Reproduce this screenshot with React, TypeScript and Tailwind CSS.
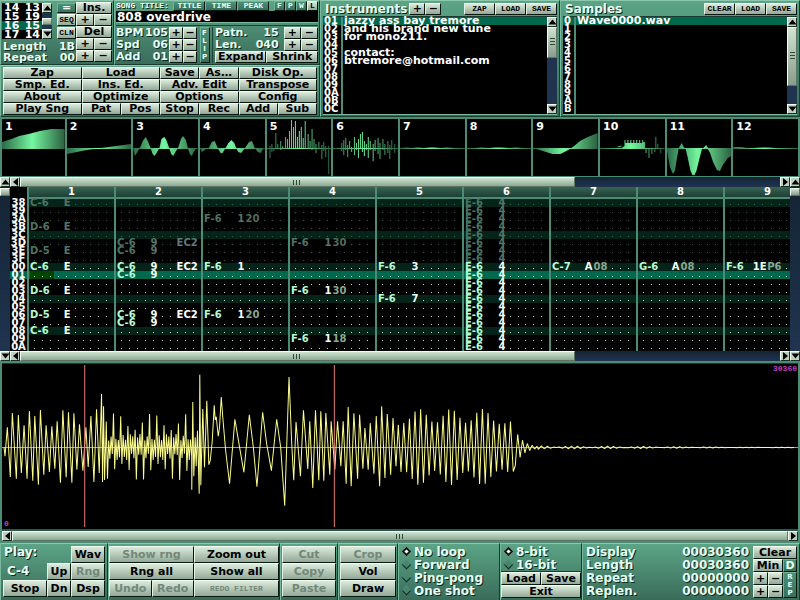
import { useState } from "react";
import type { ReactNode } from "react";
import clsx from "clsx";

const PANEL =
  "border-t border-l border-t-[#8cc8ac] border-l-[#78b89c] border-r border-b border-r-[#183c30] border-b-[#183c30] bg-linear-to-b from-[#5ca486] to-[#3a6c5a]";
const LABEL = "text-[#e4fff0] [text-shadow:1px_1px_0_#10281e]";
const TINY = "font-['Liberation_Mono',monospace] text-[8px] leading-[8px]";

type BtnProps = {
  children: ReactNode;
  className?: string;
  small?: boolean;
  green?: boolean;
  disabled?: boolean;
};

function Btn({ children, className, small, green, disabled }: BtnProps) {
  return (
    <button
      type="button"
      disabled={disabled}
      className={clsx(
        "flex min-w-0 items-center justify-center border border-r-[#081810] border-b-[#081810] whitespace-nowrap",
        small ? TINY : "leading-[10px]",
        green
          ? "border-t-[#70b498] border-l-[#70b498] bg-linear-to-b from-[#4c9078] to-[#35705c] text-[#e4fff0]"
          : "border-t-[#f4fff4] border-l-[#e4f4e4] bg-linear-to-b from-[#dcecdc] to-[#93a898]",
        !green && (disabled ? "text-[#72887a]" : "text-black"),
        className,
      )}
    >
      {children}
    </button>
  );
}

function PlusMinus() {
  return (
    <>
      <Btn>+</Btn>
      <Btn>−</Btn>
    </>
  );
}

const ARROWS = {
  up: "M0.5 6.5L4.5 1.5L8.5 6.5Z",
  down: "M0.5 1.5L4.5 6.5L8.5 1.5Z",
  left: "M7 0V8L2 4Z",
  right: "M2 0V8L7 4Z",
};

function Arrow({ dir }: { dir: keyof typeof ARROWS }) {
  return (
    <button
      type="button"
      aria-label={`Scroll ${dir}`}
      className="flex h-[10px] w-[10px] shrink-0 items-center justify-center border border-t-[#f4fff4] border-l-[#f4fff4] border-r-[#183024] border-b-[#183024] bg-[#c0d0c0]"
    >
      <svg viewBox="0 0 9 8" className="h-[8px] w-[9px] shrink-0">
        <path d={ARROWS[dir]} fill="#000" />
      </svg>
    </button>
  );
}

function Thumb({ size, vertical, grip = true }: { size: string; vertical?: boolean; grip?: boolean }) {
  return (
    <div
      style={vertical ? { height: size } : { width: size }}
      className={clsx(
        "flex items-center justify-center gap-px border border-t-[#f4fff4] border-l-[#f4fff4] border-r-[#5c7464] border-b-[#5c7464] bg-linear-to-b from-[#d0e4d0]",
        vertical ? "flex-col to-[#8a9c8c]" : "h-[10px] to-[#8ca894]",
      )}
    >
      {grip &&
        [0, 1, 2].map((i) => (
          <i
            key={i}
            className={clsx(
              "border-[#30483c]",
              vertical ? "h-[2px] w-[5px] border-t" : "h-[5px] w-[2px] border-l",
            )}
          />
        ))}
    </div>
  );
}

function VScroll({ size }: { size: string }) {
  return (
    <div className="flex w-[10px] shrink-0 flex-col bg-[#203450]">
      <Arrow dir="up" />
      <div className="min-h-0 flex-1">
        <Thumb size={size} vertical />
      </div>
      <Arrow dir="down" />
    </div>
  );
}

function HScroll({ size, corner }: { size: string; corner?: "up" | "down" }) {
  return (
    <div className="flex bg-linear-to-b from-[#142434] to-[#203450]">
      {corner && <Arrow dir={corner} />}
      <Arrow dir="left" />
      <div className="min-w-0 flex-1">
        <Thumb size={size} />
      </div>
      <Arrow dir="right" />
      {corner && <Arrow dir={corner} />}
    </div>
  );
}

const ORDER = [
  ["14", "13"],
  ["15", "19"],
  ["16", "15"],
  ["17", "14"],
];

function OrderPanel() {
  return (
    <section className={clsx(PANEL, "flex justify-between px-px")}>
      <div className="flex w-[74px] flex-col">
        <div className="flex justify-between py-[2px]">
          <div className="flex h-[36px] bg-black">
            <div className="text-white">
              {ORDER.map(([pos, pat], i) => (
                <div key={pos} className={clsx("flex h-[9px] w-[40px] justify-between px-[2px] leading-[9px]", i === 2 && "bg-[#00684c]")}>
                  <span>{pos}</span>
                  <span>{pat}</span>
                </div>
              ))}
            </div>
            <div className="flex w-[10px] flex-col justify-between bg-[#203450]">
              <Arrow dir="up" />
              <Thumb size="7px" vertical grip={false} />
              <Arrow dir="down" />
            </div>
          </div>
          <div className="flex w-[19px] flex-col justify-between">
            <Btn green className="h-[10px]">=</Btn>
            <Btn small className="h-[12px]">SEQ</Btn>
            <Btn small className="h-[12px]">CLN</Btn>
          </div>
        </div>
        <div className={clsx("flex justify-between px-px leading-[11px]", LABEL)}>
          <span>Length</span>
          <span>1B</span>
        </div>
        <div className={clsx("flex justify-between px-px leading-[12px]", LABEL)}>
          <span>Repeat</span>
          <span>00</span>
        </div>
      </div>
      <div className="grid w-[36px] auto-rows-[12px] grid-cols-2 pt-px">
        <Btn className="col-span-2">Ins.</Btn>
        <PlusMinus />
        <Btn className="col-span-2">Del</Btn>
        <PlusMinus />
        <PlusMinus />
      </div>
    </section>
  );
}

function SongPanel() {
  const [title, setTitle] = useState("808 overdrive");
  return (
    <section className={clsx(PANEL, "px-px")}>
      <div className="flex items-center justify-between">
        <label htmlFor="song-title" className={clsx(TINY, LABEL)}>
          SONG TITLE:
        </label>
        <div className="flex h-[10px]">
          <Btn small green className="w-[32px]">TITLE</Btn>
          <Btn small green className="w-[32px]">TIME</Btn>
          <Btn small green className="w-[32px]">PEAK</Btn>
        </div>
        <div className="flex h-[10px]">
          <Btn small green className="w-[11px]">F</Btn>
          <Btn small green className="w-[11px]">P</Btn>
          <Btn small green className="w-[11px]">W</Btn>
          <Btn small className="w-[11px]">L</Btn>
        </div>
      </div>
      <input
        id="song-title"
        value={title}
        onChange={(e) => setTitle(e.target.value)}
        className="block h-[12px] w-full border-b border-[#78b89c] bg-black px-px text-[12px] leading-[11px] text-white outline-none"
      />
      <div className="mt-[2px] flex justify-between border-t border-[#1c4436] pt-px leading-[12px]">
        <div className="grid auto-rows-[12px] grid-cols-[29px_24px_14px_14px]">
          {[
            ["BPM", "105"],
            ["Spd", "06"],
            ["Add", "01"],
          ].map(([name, value]) => (
            <div key={name} className="contents">
              <span className={LABEL}>{name}</span>
              <span className={clsx("pr-px text-right", LABEL)}>{value}</span>
              <PlusMinus />
            </div>
          ))}
        </div>
        <Btn green className="w-[10px]">
          <span className="text-[7px] leading-[8px] [text-orientation:upright] [writing-mode:vertical-rl]">FLIP</span>
        </Btn>
        <div className="grid w-[106px] auto-rows-[12px] grid-cols-6 border-l border-[#1c4436] pl-[2px]">
          <span className={clsx("col-span-2", LABEL)}>Patn.</span>
          <span className={clsx("col-span-2 pr-[5px] text-right", LABEL)}>15</span>
          <PlusMinus />
          <span className={clsx("col-span-2", LABEL)}>Len.</span>
          <span className={clsx("col-span-2 pr-[5px] text-right", LABEL)}>040</span>
          <PlusMinus />
          <Btn className="col-span-3">Expand</Btn>
          <Btn className="col-span-3">Shrink</Btn>
        </div>
      </div>
    </section>
  );
}

const MENU: [string, number][] = [
  ["Zap", 2], ["Load", 2], ["Save", 1], ["As…", 1], ["Disk Op.", 2],
  ["Smp. Ed.", 2], ["Ins. Ed.", 2], ["Adv. Edit", 2], ["Transpose", 2],
  ["About", 2], ["Optimize", 2], ["Options", 2], ["Config", 2],
  ["Play Sng", 2], ["Pat", 1], ["Pos", 1], ["Stop", 1], ["Rec", 1], ["Add", 1], ["Sub", 1],
];

function MenuPanel() {
  return (
    <section className={clsx(PANEL, "grid auto-rows-[12px] grid-cols-8 px-[2px] py-px")}>
      {MENU.map(([name, span]) => (
        <Btn key={name} className={span === 2 ? "col-span-2" : undefined}>
          {name}
        </Btn>
      ))}
    </section>
  );
}

type ListProps = {
  title: string;
  header: ReactNode;
  keys: string[];
  names: string[];
  numClass: string;
  thumb: string;
};

function ListPanel({ title, header, keys, names, numClass, thumb }: ListProps) {
  return (
    <section className={clsx(PANEL, "flex flex-col px-[2px] pb-px")}>
      <div className="flex h-[15px] items-center">
        <h2 className={clsx("px-[2px] text-[12px]", LABEL)}>{title}</h2>
        {header}
      </div>
      <div className="flex flex-1 border-t border-b border-t-[#183c30] border-b-[#78b89c] bg-black">
        <div className="flex flex-1 flex-col text-white">
          {keys.map((key, i) => (
            <div key={key} className="flex h-[8px] text-[10px] leading-[8px] last:flex-1">
              <span className={clsx("border-r-2 border-[#4c8c74] pl-px", numClass, i === 0 && "bg-[#00684c]")}>{key}</span>
              <span className={clsx("flex-1 pl-px text-[11px] whitespace-pre", i === 0 && "bg-[#00684c]")}>{names[i]}</span>
            </div>
          ))}
        </div>
        <VScroll size={thumb} />
      </div>
    </section>
  );
}

const INSTRUMENTS = [
  "jazzy ass bay tremore",
  "and his brand new tune",
  "for mono211.",
  "",
  "contact:",
  "btremore@hotmail.com",
];

// spikes are [x, top, bottom] around the zero line at y=29
const SPIKES_5 = [
  [3, 27, 39], [5, 25, 33], [7, 29, 32], [9, 14, 29], [11, 25, 29], [14, 22, 31], [16, 27, 29], [19, 18, 29], [21, 20, 29],
  [23, 12, 30], [25, 1, 29], [27, 8, 29], [29, 2, 29], [31, 18, 29], [33, 12, 29], [35, 8, 29], [37, 19, 29], [39, 2, 29],
  [42, 15, 29], [44, 22, 29], [46, 10, 31], [48, 20, 29], [50, 25, 34], [53, 23, 30], [56, 26, 40], [58, 23, 32], [60, 27, 38], [63, 27, 55],
];
const SPIKES_6 = [
  [9, 24, 32], [11, 21, 36], [13, 19, 31], [15, 26, 38], [17, 22, 30], [19, 28, 33], [22, 18, 36], [24, 24, 31], [26, 20, 39],
  [28, 15, 30], [30, 13, 33], [32, 22, 37], [34, 25, 31], [36, 18, 39], [38, 22, 31], [41, 25, 42], [43, 21, 32], [46, 19, 35],
  [48, 24, 40], [51, 20, 31], [53, 25, 36], [56, 22, 34], [58, 26, 40], [60, 21, 31], [63, 25, 34],
];

const spikes = (list: number[][]) => list.map(([x, a, b]) => `M${x} ${a}V${b}`).join("");

const SCOPES: { fill?: string; line?: string }[] = [
  { fill: "M0 29V23L10 20 18 17 28 15 40 12 52 10 66 10V29Z" },
  { fill: "M0 29V35L10 33 20 31 35 29 50 27 66 25V29Z" },
  { fill: "M0 29L2 37 5 32 7 29 10 22 13 18 15 22 18 29 20 35 22 37 24 34 27 29 29 20 32 18 34 21 37 29 39 35 41 37 44 32 46 29 49 20 51 17 54 21 56 29 58 35 60 37 62 33 65 29Z" },
  { fill: "M0 29L2 33 6 30 9 29 12 23 15 22 18 29 21 34 23 34 26 29 29 24 32 21 35 24 37 29 39 33 42 34 46 29 50 23 53 22 56 29 59 33 62 34 65 29Z" },
  { line: spikes(SPIKES_5) },
  { line: spikes(SPIKES_6) },
  { line: "M0 29.5L6 29 12 29.5 18 29 24 29.5 30 29 36 29 42 29.5 48 29 56 29.5 66 29.5" },
  { line: "M0 29.5H8L14 29 22 29.5 28 29 36 29 44 29.5 50 29 58 29.5H66" },
  { fill: "M0 29L10 32 20 35 28 35 36 31 42 27 48 22 56 18 66 14V29Z" },
  { line: "M18 28L22 27M47 29V34M50 29V39M53 29V35M56 29V33M57 18V29M59 25V29M62 29V34", fill: "M22 29L25 27V21H26V24H28V21H29V24H31V21H32V24H34V21H35V24H37V21H38V24H40V21H41V24H43V21H44V23H46V29Z" },
  { fill: "M0 29H12L15 24 17 28 18 29H37L40 26 42 29H66V37L62 39 57 46 54 52 51 51 47 43 44 34 41 29H36L33 40 30 52 28 56H26L24 52 21 38 19 30 18 29H12L10 40 8 52 6 55 3 48 0 32Z" },
  { line: "M0 28.5H8L14 29.5H20L28 29H36L44 29.5H66" },
];

function Scopes() {
  return (
    <div className="grid grid-cols-12 border-t border-b border-[#4c8c74] bg-black">
      {SCOPES.map((scope, i) => (
        <div key={i} className="relative h-[57px] border-r-2 border-[#4c8c74] first:border-l-2">
          <svg viewBox="0 0 66 57" preserveAspectRatio="none" className="block h-full w-full">
            <defs>
              <linearGradient id={`glow${i}`} gradientUnits="userSpaceOnUse" x1="0" y1="0" x2="66" y2="0">
                <stop offset="0" stopColor="#2c6848" />
                <stop offset="0.48" stopColor="#74f8a0" />
                <stop offset="1" stopColor="#2c6040" />
              </linearGradient>
            </defs>
            <rect y="29" width="66" height="1" fill={`url(#glow${i})`} />
            {scope.fill && <path d={scope.fill} fill={`url(#glow${i})`} />}
            {scope.line && <path d={scope.line} fill="none" stroke={`url(#glow${i})`} />}
          </svg>
          <span className="absolute top-[3px] left-[3px] leading-[9px] text-white">{i + 1}</span>
        </div>
      ))}
    </div>
  );
}

const LINES = [
  "38", "39", "3A", "3B", "3C", "3D", "3E", "3F",
  "00", "01", "02", "03", "04", "05", "06", "07", "08", "09", "0A",
];
const CURRENT = 9;

// note, instrument, volume, effect
type Cell = [string, string?, string?, string?];

const CHANNELS: Record<number, Cell>[] = [
  { 0: ["C-6", "E"], 3: ["D-6", "E"], 6: ["D-5", "E"], 8: ["C-6", "E"], 11: ["D-6", "E"], 14: ["D-5", "E"], 16: ["C-6", "E"] },
  {
    5: ["C-6", "9", "", "EC2"], 6: ["C-6", "9"], 8: ["C-6", "9", "", "EC2"], 9: ["C-6", "9"],
    14: ["C-6", "9", "", "EC2"], 15: ["C-6", "9"],
  },
  { 2: ["F-6", "1", "20"], 8: ["F-6", "1"], 14: ["F-6", "1", "20"] },
  { 5: ["F-6", "1", "30"], 11: ["F-6", "1", "30"], 17: ["F-6", "1", "18"] },
  { 8: ["F-6", "3"], 12: ["F-6", "7"] },
  Object.fromEntries(LINES.map((_, i) => [i, ["E-6", "4"] as Cell])),
  { 8: ["C-7", "A", "08"] },
  { 8: ["G-6", "A", "08"] },
  { 8: ["F-6", "1E", "P6"] },
];

function rowBg(i: number) {
  if (i === CURRENT) return "bg-[#00684c]";
  return i % 4 === 0 ? "bg-[#04241a]" : "bg-black";
}

function Field({ text, className, dim }: { text?: string; className: string; dim: boolean }) {
  return (
    <span
      className={clsx(
        "h-[8px]",
        className,
        !text && "bg-size-[8px_8px] bg-position-[4px_5px]",
        !text && dim && "bg-[conic-gradient(from_270deg_at_1px_1px,#3c5c50_90deg,transparent_0)]",
        !text && !dim && "bg-[conic-gradient(from_270deg_at_1px_1px,#c8dcd0_90deg,transparent_0)]",
      )}
    >
      {text}
    </span>
  );
}

function PatternRow({ cell, line, first }: { cell?: Cell; line: number; first: boolean }) {
  const dim = line < 8;
  const [note, ins, vol, fx] = cell ?? [];
  return (
    <div className={clsx("flex h-[8px] pl-px text-[10px] leading-[8px]", rowBg(line))}>
      <Field
        text={note}
        dim={dim}
        className={clsx("w-[24px]", dim ? "text-[#4c7464]" : "text-[#b4fcd0]", first && line === CURRENT && "bg-[#004400]")}
      />
      <Field text={ins} dim={dim} className={clsx("w-[17px] text-right", dim ? "text-[#587468]" : "text-[#f0fff4]")} />
      <Field text={vol} dim={dim} className={clsx("w-[16px] text-center", dim ? "text-[#506c5c]" : "text-[#88a890]")} />
      <Field text={fx} dim={dim} className={clsx("w-[28px] text-center", dim ? "text-[#60787c]" : "text-white")} />
    </div>
  );
}

function PatternScroll() {
  return (
    <div className="w-[10px] shrink-0 bg-linear-to-b from-[#142434] to-[#203450] pt-px">
      <Thumb size="8px" vertical grip={false} />
    </div>
  );
}

function Pattern() {
  return (
    <section className="flex">
      <PatternScroll />
      <div className="w-[17px] shrink-0 bg-black pt-[12px] text-center text-[10px] text-white">
        {LINES.map((line, i) => (
          <div key={line} className={clsx("h-[8px] leading-[8px]", i === CURRENT && "bg-[#00684c]")}>
            {line}
          </div>
        ))}
      </div>
      <div className="flex min-w-0 flex-1 overflow-hidden bg-black">
        {CHANNELS.map((cells, c) => (
          <div key={c} className="w-[87px] shrink-0 border-l-2 border-[#4c8c74]">
            <div className="h-[12px] border-b-2 border-[#4c8c74] bg-linear-to-b from-[#386454] to-[#1c4034] text-center text-[10px] leading-[10px] text-white">
              {c + 1}
            </div>
            {LINES.map((line, i) => (
              <PatternRow key={line} cell={cells[i]} line={i} first={c === 0} />
            ))}
          </div>
        ))}
      </div>
      <PatternScroll />
    </section>
  );
}

// sample peaks on a 794x165 canvas, stored at three times that scale
const INTRO = [
  6, 250, 9, 277, 16, 190, 25, 339, 31, 147, 43, 344, 49, 153, 58, 327, 66, 184, 75, 344, 82, 141, 92, 350, 98, 156,
  109, 362, 115, 138, 125, 332, 132, 184, 142, 324, 149, 187, 158, 314, 165, 172, 175, 356, 182, 139, 192, 340, 199, 145,
  209, 356, 215, 148, 224, 317, 232, 181, 242, 320, 251, 190, 258, 309, 266, 156, 275, 354, 283, 136, 291, 327, 298, 90,
  301, 354, 304, 127, 307, 348, 311, 212,
];
const BREAK = [
  568, 377, 571, 114, 574, 337, 578, 220, 581, 307, 585, 200, 590, 389, 592, 32, 595, 364, 601, 135, 606, 310, 613, 110,
  619, 302, 623, 290, 629, 232, 635, 124, 638, 168, 641, 158, 647, 217, 651, 190, 656, 99, 661, 162, 669, 257, 681, 359,
  697, 166, 711, 250, 724, 325, 740, 152, 752, 250, 763, 368, 780, 145, 792, 240, 806, 320, 822, 166, 834, 250, 846, 425,
  859, 39, 867, 240, 873, 349, 880, 174, 893, 337, 902, 139, 915, 315, 921, 172, 930, 372, 938, 139, 948, 349, 954, 142,
  963, 350, 969, 147, 981, 332, 985, 172, 996, 317, 1004, 172, 1014, 307, 1021, 172, 1030, 359, 1036, 129, 1045, 367,
  1053, 148, 1064, 344, 1070, 152, 1080, 314, 1086, 192, 1096, 317, 1102, 177, 1113, 329, 1120, 156, 1130, 367, 1136, 127,
  1146, 342, 1153, 150, 1163, 332, 1170, 162, 1179, 307, 1186, 182,
];

function buildWave() {
  const pts: string[] = [];
  const push = (x: number, y: number) => pts.push(`${x.toFixed(1)},${y.toFixed(1)}`);
  for (let i = 0; i < INTRO.length; i += 2) push(INTRO[i] / 3, INTRO[i + 1] / 3);
  // chopped middle part
  for (let i = 0; i < 72; i++) {
    const swell = i % 6 < 2 ? 34 : 13;
    const amp = swell * (0.75 + 0.25 * Math.sin(i * 2.3));
    push(104 + i * 1.2, 83 + (i % 2 ? amp : -amp));
  }
  for (let i = 0; i < BREAK.length; i += 2) push(BREAK[i] / 3, BREAK[i + 1] / 3);
  for (let i = 0, x = 398; x < 511; i++, x += 2.8) {
    const amp = 31 + 7 * Math.sin(x / 5) - (x > 495 ? (x - 495) * 0.9 : 0);
    push(x, 83 + (i % 2 ? -amp : amp));
  }
  for (let i = 0, x = 512; x < 534; i++, x += 2.4) {
    const amp = 18 * Math.exp(-(x - 512) / 8);
    push(x, 83.5 + (i % 2 ? -amp : amp));
  }
  for (let i = 0, x = 535; x < 792; i++, x += 3) {
    const amp = Math.max(0.3, 1.8 - (x - 535) / 130) * Math.abs(Math.sin(x / 11));
    push(x, 83.5 + (i % 2 ? -amp : amp));
  }
  return pts.join(" ");
}

const WAVE = buildWave();

function SampleView() {
  return (
    <section className="border-2 border-[#4c8c74] bg-[#4c8c74]">
      <div className="relative h-[166px] border-t border-[#183c30] bg-black">
        <svg viewBox="0 0 794 165" preserveAspectRatio="none" className="block h-full w-full">
          <path d="M0 83.5H794" stroke="#80b088" />
          <polyline points={WAVE} fill="none" stroke="#fcfc8c" strokeLinejoin="bevel" />
          <path d="M82.5 1V163M331.5 1V163" stroke="#e87878" />
        </svg>
        <span className={clsx("absolute bottom-px left-[2px] text-[#c040c0]", TINY)}>0</span>
        <span className={clsx("absolute top-px right-px text-[#c040c0]", TINY)}>30360</span>
      </div>
      <div className="border-t-2 border-[#28584a]">
        <HScroll size="100%" />
      </div>
    </section>
  );
}

function Radios({ name, options }: { name: string; options: string[] }) {
  const [picked, setPicked] = useState(options[0]);
  return (
    <div>
      {options.map((option) => (
        <label key={option} className={clsx("flex h-[13px] items-center gap-[4px] pl-[4px] text-[12px] leading-[12px] whitespace-nowrap", LABEL)}>
          <input
            type="radio"
            name={name}
            checked={picked === option}
            onChange={() => setPicked(option)}
            className="h-[7px] w-[7px] shrink-0 rotate-45 appearance-none border border-t-[#4c8c74] border-l-[#4c8c74] border-r-[#102820] border-b-[#102820] bg-[#458570] checked:border-2 checked:border-[#0c2018] checked:bg-white"
          />
          {option}
        </label>
      ))}
    </div>
  );
}

const RANGES = [
  ["Display", "00030360"],
  ["Length", "00030360"],
  ["Repeat", "00000000"],
  ["Replen.", "00000000"],
];

function SampleEditor() {
  return (
    <footer className="grid flex-1 grid-cols-[108fr_172fr_58fr_60fr_102fr_82fr_218fr]">
      <section className={clsx(PANEL, "grid auto-rows-[17px] grid-cols-[44fr_24fr_34fr] p-[2px]")}>
        <span className={clsx("col-span-2 px-px text-[12px] leading-[12px]", LABEL)}>Play:</span>
        <Btn>Wav</Btn>
        <span className={clsx("px-[4px] text-[12px] leading-[17px]", LABEL)}>C-4</span>
        <Btn>Up</Btn>
        <Btn disabled>Rng</Btn>
        <Btn>Stop</Btn>
        <Btn>Dn</Btn>
        <Btn>Dsp</Btn>
      </section>
      <section className={clsx(PANEL, "grid auto-rows-[17px] grid-cols-4 py-[2px]")}>
        <Btn disabled className="col-span-2">Show rng</Btn>
        <Btn className="col-span-2">Zoom out</Btn>
        <Btn className="col-span-2">Rng all</Btn>
        <Btn className="col-span-2">Show all</Btn>
        <Btn disabled>Undo</Btn>
        <Btn disabled>Redo</Btn>
        <Btn disabled small className="col-span-2">REDO FILTER</Btn>
      </section>
      <section className={clsx(PANEL, "grid auto-rows-[17px] px-px py-[2px]")}>
        <Btn disabled>Cut</Btn>
        <Btn disabled>Copy</Btn>
        <Btn disabled>Paste</Btn>
      </section>
      <section className={clsx(PANEL, "grid auto-rows-[17px] px-px py-[2px]")}>
        <Btn disabled>Crop</Btn>
        <Btn>Vol</Btn>
        <Btn>Draw</Btn>
      </section>
      <section className={clsx(PANEL, "pt-px")}>
        <Radios name="loop" options={["No loop", "Forward", "Ping-pong", "One shot"]} />
      </section>
      <section className={clsx(PANEL, "pt-px")}>
        <Radios name="depth" options={["8-bit", "16-bit"]} />
        <div className="grid auto-rows-[13px] grid-cols-2 border-t border-[#183c30]">
          <Btn>Load</Btn>
          <Btn>Save</Btn>
          <Btn className="col-span-2">Exit</Btn>
        </div>
      </section>
      <section className={clsx(PANEL, "flex justify-between p-[2px]")}>
        <dl className={clsx("grid flex-1 auto-rows-[13px] grid-cols-[auto_auto] justify-between pr-[4px] pl-px text-[12px] leading-[13px]", LABEL)}>
          {RANGES.map(([name, value]) => (
            <div key={name} className="contents">
              <dt>{name}</dt>
              <dd>{value}</dd>
            </div>
          ))}
        </dl>
        <div className="grid w-[44px] auto-rows-[13px] grid-cols-[15px_15px_14px]">
          <Btn className="col-span-3">Clear</Btn>
          <Btn className="col-span-2">Min</Btn>
          <Btn green>D</Btn>
          <PlusMinus />
          <Btn green className="row-span-2">
            <span className="text-[7px] leading-[8px] [text-orientation:upright] [writing-mode:vertical-rl]">REP</span>
          </Btn>
          <PlusMinus />
        </div>
      </section>
    </footer>
  );
}

export default function App() {
  return (
    <main className="flex min-h-screen flex-col overflow-hidden bg-[#4c8c74] font-['DejaVu_Sans',sans-serif] text-[11px] leading-[12px] font-bold">
      <div className="grid grid-cols-[4fr_3fr_3fr] pb-px">
        <div className="flex flex-col">
          <div className="grid grid-cols-[114fr_206fr]">
            <OrderPanel />
            <SongPanel />
          </div>
          <MenuPanel />
        </div>
        <ListPanel
          title="Instruments"
          keys={["01", "02", "03", "04", "05", "06", "07", "08", "09", "0A", "0B", "0C"]}
          names={INSTRUMENTS}
          numClass="w-[20px]"
          thumb="40%"
          header={
            <>
              <div className="grid h-[12px] w-[32px] grid-cols-2">
                <PlusMinus />
              </div>
              <div className="ml-auto grid h-[12px] w-[93px] grid-cols-3">
                <Btn small>ZAP</Btn>
                <Btn small>LOAD</Btn>
                <Btn small>SAVE</Btn>
              </div>
            </>
          }
        />
        <ListPanel
          title="Samples"
          keys={["0", "1", "2", "3", "4", "5", "6", "7", "8", "9", "A", "B"]}
          names={["Wave0000.wav"]}
          numClass="w-[13px]"
          thumb="76%"
          header={
            <div className="ml-auto grid h-[12px] w-[93px] grid-cols-3">
              <Btn small>CLEAR</Btn>
              <Btn small>LOAD</Btn>
              <Btn small>SAVE</Btn>
            </div>
          }
        />
      </div>
      <Scopes />
      <HScroll size="73%" corner="up" />
      <Pattern />
      <HScroll size="73%" corner="down" />
      <SampleView />
      <SampleEditor />
    </main>
  );
}
